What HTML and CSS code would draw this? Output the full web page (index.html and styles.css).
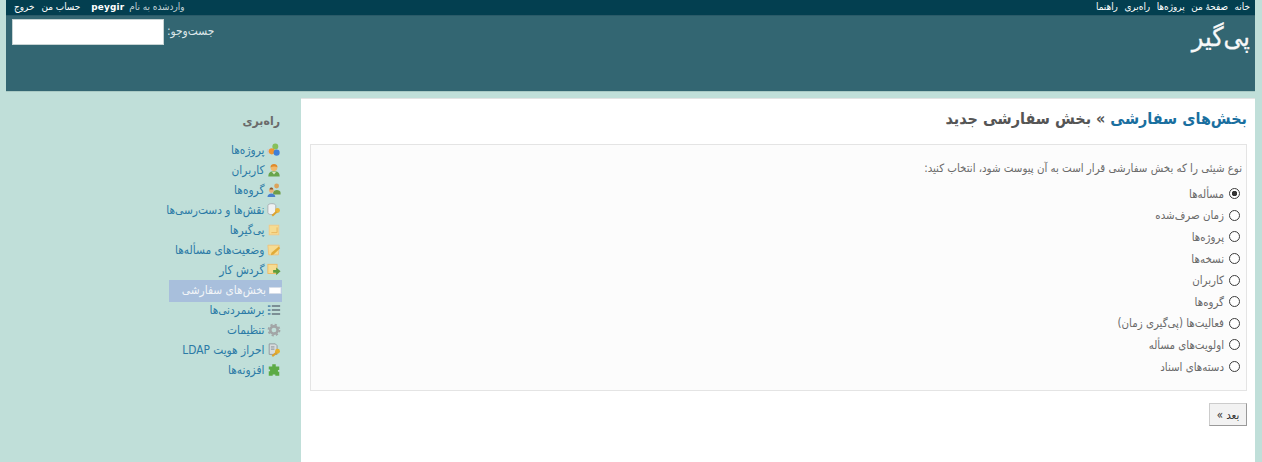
FILE: index.html
```
<!DOCTYPE html>
<html lang="fa" dir="rtl">
<head>
<meta charset="utf-8">
<title>پی‌گیر</title>
<link rel="stylesheet" href="styles.css">
</head>
<body>
<div class="wrapper">
  <div class="top-menu">
    <ul class="menu">
      <li><a href="#">خانه</a></li>
      <li><a href="#">صفحهٔ من</a></li>
      <li><a href="#">پروژه‌ها</a></li>
      <li><a href="#">راه‌بری</a></li>
      <li><a href="#">راهنما</a></li>
    </ul>
    <ul class="menu account">
      <li class="loggedas">واردشده به نام <a href="#" class="user">peygir</a></li>
      <li><a href="#">حساب من</a></li>
      <li><a href="#">خروج</a></li>
    </ul>
  </div>
  <div class="header">
    <h1 class="brand">پی‌گیر</h1>
    <form class="search">
      <label class="search-label">جست‌وجو:</label>
      <input class="search-input" type="text">
    </form>
  </div>
  <div class="main">
    <div class="content">
      <h2 class="title"><a href="#">بخش‌های سفارشی</a> » بخش سفارشی جدید</h2>
      <div class="box">
        <p class="lead">نوع شیئی را که بخش سفارشی قرار است به آن پیوست شود، انتخاب کنید:</p>
        <label class="opt"><input type="radio" name="t" checked>مسأله‌ها</label>
        <label class="opt"><input type="radio" name="t">زمان صرف‌شده</label>
        <label class="opt"><input type="radio" name="t">پروژه‌ها</label>
        <label class="opt"><input type="radio" name="t">نسخه‌ها</label>
        <label class="opt"><input type="radio" name="t">کاربران</label>
        <label class="opt"><input type="radio" name="t">گروه‌ها</label>
        <label class="opt"><input type="radio" name="t">فعالیت‌ها (پی‌گیری زمان)</label>
        <label class="opt"><input type="radio" name="t">اولویت‌های مسأله</label>
        <label class="opt"><input type="radio" name="t">دسته‌های اسناد</label>
      </div>
      <div class="actions"><button class="next" type="button">بعد »</button></div>
    </div>
    <div class="sidebar">
      <h3 class="side-title">راه‌بری</h3>
      <ul class="side-menu">
        <li><a href="#"><svg class="ico" viewBox="0 0 16 16"><rect x="0" y="7" width="6" height="5" fill="#c9cfd2"/><circle cx="9.500" cy="4" r="3.400" fill="#86c05a"/><circle cx="5.500" cy="9.500" r="3.500" fill="#f0952f"/><circle cx="11" cy="11" r="3.500" fill="#3f80d8"/></svg>پروژه‌ها</a></li>
        <li><a href="#"><svg class="ico" viewBox="0 0 16 16"><path d="M1.500 15.500c0-4.500 2.500-6 6.500-6s6.500 1.500 6.500 6z" fill="#68a54c"/><path d="M5.500 10l2.500 3 2.500-3z" fill="#dbe8c8"/><circle cx="8" cy="5.500" r="3.800" fill="#f0b86a"/><path d="M4 5c0-5 8-5 8 0-2-1.500-6-1.500-8 0z" fill="#e08a2a"/></svg>کاربران</a></li>
        <li><a href="#"><svg class="ico" viewBox="0 0 16 16"><circle cx="11" cy="3.500" r="2.800" fill="#dca45c"/><path d="M7 11c0-4 8.500-4 8.500 0v2H7z" fill="#6f9d48"/><circle cx="5" cy="8.500" r="2.800" fill="#eab07a"/><path d="M3 7.500c0-3 4-3 4 0z" fill="#8a5a30"/><path d="M.5 16c0-5.500 9-5.500 9 0z" fill="#4a80cc"/></svg>گروه‌ها</a></li>
        <li><a href="#"><svg class="ico" viewBox="0 0 16 16"><path d="M1 3c0-3 9-3 9 0v8c0 3-9 3-9 0z" fill="#f0f2f3" stroke="#a5adb1"/><circle cx="12" cy="8.500" r="2.800" fill="#eab53a"/><path d="M11 10l-5 4.500" stroke="#dca22e" stroke-width="2.200"/></svg>نقش‌ها و دست‌رسی‌ها</a></li>
        <li><a href="#"><svg class="ico" viewBox="0 0 16 16"><rect x="2.500" y="2.500" width="11" height="11" fill="#f6dc92" stroke="#f1c987"/><path d="M5 11h6.500V5" fill="none" stroke="#e8b45a"/></svg>پی‌گیرها</a></li>
        <li><a href="#"><svg class="ico" viewBox="0 0 16 16"><path d="M1 2.500h13l-1 11H2z" fill="#f6dc92" stroke="#f0c27c"/><path d="M5 11l8.500-7 1.500 2-7.500 7-3 1z" fill="#e0ab38"/></svg>وضعیت‌های مسأله‌ها</a></li>
        <li><a href="#"><svg class="ico" viewBox="0 0 16 16"><rect x="1" y="1.500" width="10.500" height="10.500" fill="#f6dc92" stroke="#f0b860"/><path d="M7 8h3.500V5l5 4.500-5 4.500v-3H7z" fill="#5d9c3c"/></svg>گردش کار</a></li>
        <li class="selected"><a href="#"><svg class="ico ico-wide" viewBox="0 0 13 7"><rect x="0" y="0.500" width="12" height="6" fill="#fff" stroke="#d5dde8"/></svg>بخش‌های سفارشی</a></li>
        <li><a href="#"><svg class="ico" viewBox="0 0 16 16"><path d="M1 3.500h3M1 8h3M1 12.500h3" stroke="#5b8fb0" stroke-width="2"/><path d="M5.500 3.500h9.500M5.500 8h9.500M5.500 12.500h9.500" stroke="#66757f" stroke-width="1.700"/></svg>برشمردنی‌ها</a></li>
        <li><a href="#"><svg class="ico" viewBox="0 0 16 16"><circle cx="8" cy="8" r="4.200" fill="none" stroke="#a2a5a6" stroke-width="3"/><circle cx="8" cy="8" r="6.300" fill="none" stroke="#a2a5a6" stroke-width="2" stroke-dasharray="2.500 2.450"/></svg>تنظیمات</a></li>
        <li><a href="#"><svg class="ico" viewBox="0 0 16 16"><path d="M2.500 1h7l2 2v10h-9z" fill="#d8dcde" stroke="#8d9599"/><path d="M4.500 4.500h4M4.500 7h4" stroke="#7d8589"/><circle cx="12" cy="9.500" r="2.800" fill="#e6b02e"/><path d="M11 11l-5 4" stroke="#dca22e" stroke-width="2.200"/></svg>احراز هویت LDAP</a></li>
        <li><a href="#"><svg class="ico" viewBox="0 0 16 16"><path d="M6 1.500h4v2.500h4v4h-1.500v2h1.500v4.500H9.500v-1.500h-3v1.500H2v-5h1.500V7.500H2V4h4z" fill="#5cab46"/></svg>افزونه‌ها</a></li>
      </ul>
    </div>
  </div>
</div>
</body>
</html>
```
FILE: styles.css
```
* { box-sizing: border-box; }
html, body { margin: 0; padding: 0; height: 100%; overflow: hidden; }
body { background: #c0dfd9; font-family: "DejaVu Sans", "Noto Sans", sans-serif; font-stretch: condensed; font-size: 12px; color: #484848; }
a { color: #169; text-decoration: none; }
ul { list-style: none; margin: 0; padding: 0; }
.wrapper { margin: 0 7px 0 6px; height: 462px; display: flex; flex-direction: column; }
.top-menu { height: 16px; background: #033f50; display: flex; justify-content: space-between; align-items: center; padding: 0 5px 1px 8px; font-size: 9.9px; color: #ccc; line-height: 14px; border-bottom: 1px solid #2a5a68; }
.menu { display: flex; gap: 6.5px; }
.menu a { color: #fff; }
.account { gap: 7px; }
.loggedas { color: #c4d4d8; margin-left: 4px; }
.menu a.user { font-stretch: normal; font-size: 8.9px; font-weight: bold; margin-right: 2px; letter-spacing: .2px; }
.header { height: 76px; background: #336672; display: flex; justify-content: space-between; padding: 3px 5px 0 6px; color: #f8f8f8; border-bottom: 1px solid #a9c9c4; }
.brand { margin: 0; font-size: 26.500px; font-weight: normal; line-height: 36px; color: #f8f8f8; -webkit-text-stroke: .3px #f8f8f8; }
.search { display: flex; align-items: flex-start; gap: 3px; font-size: 11.8px; color: #dfe8ea; }
.search-label { line-height: 24px; }
.search-input { width: 152px; height: 26px; border: 1px solid #c8d4d4; background: #fff; padding: 0; }
.main { flex: 1; display: flex; margin-top: 6px; min-height: 0; }
.sidebar { width: 295px; flex: none; padding: 13px 19px 0 0; }
.content { flex: 1; background: #fff; border-top: 1px solid #e4e4e4; padding: 9px 8px 0 9px; }
.side-title { margin: 0 2px 9px 0; font-size: 12.2px; font-weight: bold; line-height: 20px; color: #6a6a6a; }
.side-menu { font-size: 11.8px; width: 113px; }
.side-menu li { height: 20px; }
.side-menu a { display: flex; align-items: center; height: 20px; padding-right: 1px; white-space: nowrap; color: #2b7aa6; }
.ico { width: 14px; height: 14px; margin-left: 2.500px; flex: none; }
.ico-wide { width: 13px; height: 7px; margin-left: 3px; }
.side-menu .selected { height: 20px; }
.side-menu .selected a { height: 22px; padding-bottom: 2px; padding-right: 0; background: #a8bfdc; color: #f2f5f8; }
.title { margin: 0 0 14px; font-size: 16px; font-weight: bold; line-height: 22px; color: #555; }
.title a { color: #1a6f9f; }
.box { height: 247px; background: #fcfcfc; border: 1px solid #e4e4e4; padding: 14px 4px 0; font-size: 11.4px; color: #6a6a6a; }
.lead { margin: 0 0 6px; line-height: 18px; }
.opt { display: flex; align-items: center; height: 21.6px; padding-right: 2px; }
.opt input { appearance: none; margin: 0 0 0 5px; width: 11px; height: 11px; flex: none; border: 1px solid #3c3c3c; border-radius: 50%; background: #fff; }
.opt input:checked { background: radial-gradient(circle, #333 0, #333 2.500px, #fff 3px); }
.actions { margin-top: 12px; }
.next { display: block; width: 38px; height: 23px; padding: 0; border: 1px solid #ccc; border-bottom-color: #999; border-right-color: #999; background: #f2f2f2; font: inherit; font-size: 11.400px; color: #333; }
```
